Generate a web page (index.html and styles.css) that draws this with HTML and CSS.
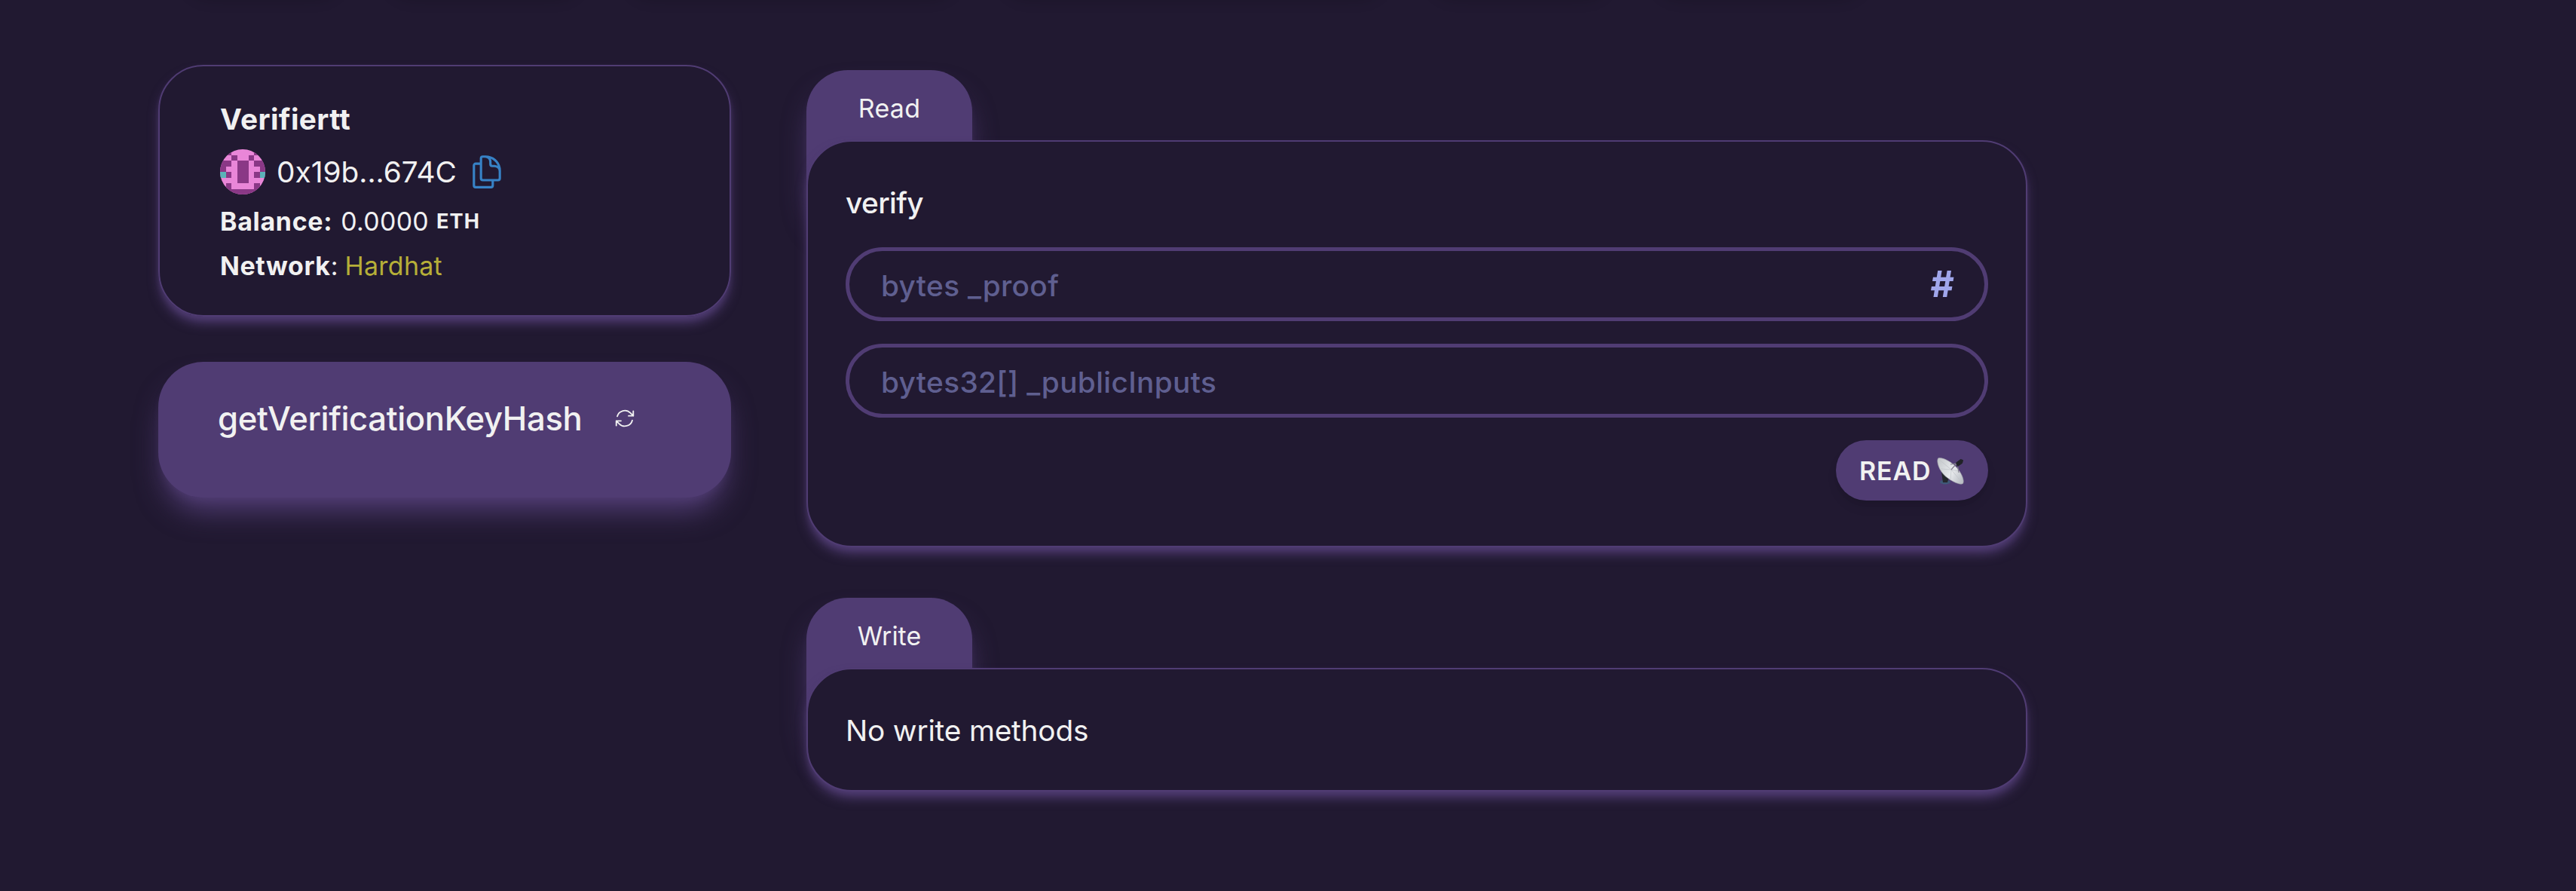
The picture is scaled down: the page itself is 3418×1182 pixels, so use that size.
FILE: index.html
```html
<!DOCTYPE html>
<html lang="en">
<head>
<meta charset="utf-8">
<title>Debug Contracts</title>
<link rel="stylesheet" href="styles.css">
</head>
<body>
<div class="tabs-edge"><i class="chip chip-a"></i><i class="chip chip-b"></i><i class="chip chip-c"></i><i class="chip chip-d"></i><i class="chip chip-e"></i><i class="chip chip-f"></i></div>
<main class="layout">
  <aside class="side">
    <section class="info">
      <div class="name">Verifiertt</div>
      <div class="address">
        <svg class="avatar" viewBox="0 0 8 8" shape-rendering="crispEdges">
          <rect width="8" height="8" fill="#e986d8"/>
          <path fill="#8a3886" d="M0 0h2v1H0zM6 0h2v1H6zM2 1h1v1H2zM5 1h1v1H5zM0 2h2v1H0zM6 2h2v1H6zM0 3h1v1H0zM7 3h1v1H7zM3 2h2v4H3zM1 4h1v1H1zM6 4h1v1H6zM1 6h1v1H1zM6 6h1v1H6zM0 7h8v1H0z"/>
          <path fill="#5ab3b8" d="M0 4h1v1H0zM7 4h1v1H7z"/>
        </svg>
        <span class="hash">0x19b...674C</span>
        <svg class="copy" viewBox="0 0 24 24"><path d="M15.75 17.25v3.375c0 .621-.504 1.125-1.125 1.125h-9.75a1.125 1.125 0 01-1.125-1.125V7.875c0-.621.504-1.125 1.125-1.125H6.75a9.06 9.06 0 011.5.124m7.5 10.376h3.375c.621 0 1.125-.504 1.125-1.125V11.25c0-4.46-3.243-8.161-7.5-8.876a9.06 9.06 0 00-1.5-.124H9.375c-.621 0-1.125.504-1.125 1.125v3.5m7.5 10.375H9.375a1.125 1.125 0 01-1.125-1.125v-9.25m12 6.625v-1.875a3.375 3.375 0 00-3.375-3.375h-1.5a1.125 1.125 0 01-1.125-1.125v-1.5a3.375 3.375 0 00-3.375-3.375H9.75"/></svg>
      </div>
      <div class="row balance"><b class="label">Balance:</b><span class="amount">0.0000</span><b class="unit">ETH</b></div>
      <div class="row network"><span><b>Network</b>:</span><span class="chain">Hardhat</span></div>
    </section>
    <section class="variable">
      <span class="variable-name">getVerificationKeyHash</span>
      <svg class="refresh" viewBox="0 0 24 24"><path d="M16.023 9.348h4.992v-.001M2.985 19.644v-4.992m0 0h4.992m-4.993 0l3.181 3.183a8.25 8.25 0 0013.803-3.7M4.031 9.865a8.25 8.25 0 0113.803-3.7l3.181 3.182m0-4.991v4.99"/></svg>
    </section>
  </aside>
  <div class="methods">
    <section class="group">
      <div class="tab tab-read">Read</div>
      <div class="panel panel-read">
        <div class="method">verify</div>
        <label class="field"><input class="input" placeholder="bytes _proof"><span class="convert">#</span></label>
        <label class="field"><input class="input" placeholder="bytes32[] _publicInputs"></label>
        <button class="button">READ
          <svg class="dish" viewBox="0 0 36 36">
            <defs><linearGradient id="plate" x1="0" y1="0.2" x2="1" y2="0.8"><stop offset="0" stop-color="#c6cacd"/><stop offset=".55" stop-color="#e9ebee"/><stop offset="1" stop-color="#b9bdc4"/></linearGradient></defs>
            <ellipse cx="11" cy="32.500" rx="7" ry="3" fill="#3f5878"/>
            <path d="M6 19l10 7-2 7H8z" fill="#25282d"/>
            <path d="M1.500 1C6-1 17 4 25 12s12 19 9.500 22.500C31 37 20 32 11.500 25S-1 5 1.500 1z" fill="url(#plate)" stroke="#9a9ca4" stroke-width=".6"/>
            <path d="M2 2l17 14 15 18M19 16L5 15M19 16l-1 14M19 16l10 2" fill="none" stroke="#c2c5ca" stroke-width=".8"/>
            <path d="M18 9l9-1 2 12M19 16l8-9" fill="none" stroke="#85808f" stroke-width="1.200"/>
            <path d="M25.500 7l6-4.500 3 1-1 4-6 4z" fill="#202227" stroke="#202227" stroke-linejoin="round"/>
          </svg>
        </button>
      </div>
    </section>
    <section class="group">
      <div class="tab">Write</div>
      <div class="panel">
        <div class="empty">No write methods</div>
      </div>
    </section>
  </div>
</main>
</body>
</html>
```
FILE: styles.css
```css
:root {
  --base: #211931;
  --purple: #503c73;
  --text: #f1f1f1;
}

* { box-sizing: border-box; }

body {
  margin: 0;
  height: 1182px;
  overflow: hidden;
  background: var(--base);
  color: var(--text);
  font-family: Inter, "Liberation Sans", sans-serif;
  font-size: 38.8px;
  line-height: 60px;
}

/* lower edge of the contract switcher scrolled out above */
.tabs-edge {
  display: flex;
  gap: 48px;
  height: 80px;
  margin: -84px 0 0 240px;
}
.chip {
  border-radius: 40px;
  box-shadow: 0 10px 15px -2px rgba(0, 0, 0, .1);
}
.chip-a { width: 220px; }
.chip-b { width: 270px; }
.chip-c { width: 450px; }
.chip-d { width: 520px; }
.chip-e { width: 250px; }
.chip-f { width: 290px; }

.layout {
  display: flex;
  align-items: flex-start;
  gap: 100px;
  padding: 90px 0 0 210px;
}

.side {
  display: flex;
  flex-direction: column;
  gap: 60px;
  width: 760px;
}

.info {
  height: 334px;
  padding: 40px 80px 0;
  border: 2px solid var(--purple);
  border-radius: 60px;
  box-shadow: 0 10px 15px -2.5px var(--purple), 0 5px 10px -5px var(--purple);
}
.name { font-weight: 700; letter-spacing: .38px; }
.address { display: flex; align-items: center; height: 60px; margin-top: 10px; }
.avatar { width: 60px; height: 60px; border-radius: 50%; }
.hash { margin-left: 15px; width: 239px; white-space: nowrap; }
.copy {
  width: 50px;
  height: 50px;
  margin-left: 15px;
  fill: none;
  stroke: #3782c6;
  stroke-width: 1.5;
  stroke-linecap: round;
  stroke-linejoin: round;
}
.row { display: flex; align-items: center; font-size: 33.95px; }
.balance { margin-top: 6px; line-height: 59px; }
.label { letter-spacing: .7px; }
.amount { margin-left: 11px; letter-spacing: .26px; }
.unit { margin-left: 10px; font-size: 27.16px; letter-spacing: 1.1px; }
.network b { letter-spacing: .6px; }
.chain { margin-left: 9px; color: #b6af38; letter-spacing: .3px; }

.variable {
  display: flex;
  gap: 42px;
  height: 180px;
  padding: 46px 79px 0;
  border-radius: 60px;
  background: var(--purple);
  box-shadow: 0 25px 37.5px -7.5px var(--purple), 0 10px 15px -10px var(--purple);
}
.variable-name { font-size: 43.65px; font-weight: 500; letter-spacing: -.38px; }
.refresh {
  width: 30px;
  height: 30px;
  margin-top: 14px;
  fill: none;
  stroke: var(--text);
  stroke-width: 1.5;
  stroke-linecap: round;
  stroke-linejoin: round;
}

.methods {
  display: flex;
  flex-direction: column;
  gap: 67px;
  width: 1620px;
  padding-top: 7px;
}
.group { display: flex; flex-direction: column; }
.tab {
  width: 220px;
  height: 200px;
  margin-bottom: -107px;
  padding-top: 25px;
  border-radius: 55px;
  background: var(--purple);
  box-shadow: 0 25px 37.5px -7.5px var(--purple), 0 10px 15px -10px var(--purple);
  font-size: 33.95px;
  line-height: 52px;
  text-align: center;
}
.tab-read { letter-spacing: .26px; }
.panel {
  position: relative;
  display: flex;
  flex-direction: column;
  padding: 51px 50px 49px;
  border: 2px solid var(--purple);
  border-radius: 60px;
  background: var(--base);
  box-shadow: 0 10px 15px -2.5px var(--purple), 0 5px 10px -5px var(--purple);
}
.panel-read { gap: 30px; padding-bottom: 60px; }
.method { margin-bottom: -1px; font-weight: 500; letter-spacing: -.6px; }
.empty { letter-spacing: -.19px; }

.field {
  display: flex;
  align-items: center;
  height: 98px;
  padding: 0 40px 0 42px;
  border: 5px solid var(--purple);
  border-radius: 49px;
}
.input {
  flex: 1;
  height: 88px;
  padding: 2px 0 0;
  border: 0;
  outline: 0;
  background: transparent;
  color: var(--text);
  font: 500 38.8px Inter, "Liberation Sans", sans-serif;
  letter-spacing: .34px;
}
.input::placeholder { color: #5f5f90; opacity: 1; }
.convert { color: #a0a6eb; font-size: 48.5px; font-weight: 700; }

.button {
  display: flex;
  align-items: center;
  align-self: flex-end;
  gap: 8px;
  width: 202px;
  height: 80px;
  padding: 1px 0 0 31px;
  border: 0;
  border-radius: 40px;
  background: var(--purple);
  box-shadow: 0 10px 15px -2.5px rgba(0, 0, 0, .1), 0 5px 10px -5px rgba(0, 0, 0, .1);
  color: var(--text);
  font: 600 33.95px Inter, "Liberation Sans", sans-serif;
  letter-spacing: .87px;
}
.dish { width: 36px; height: 36px; overflow: visible; }
```
